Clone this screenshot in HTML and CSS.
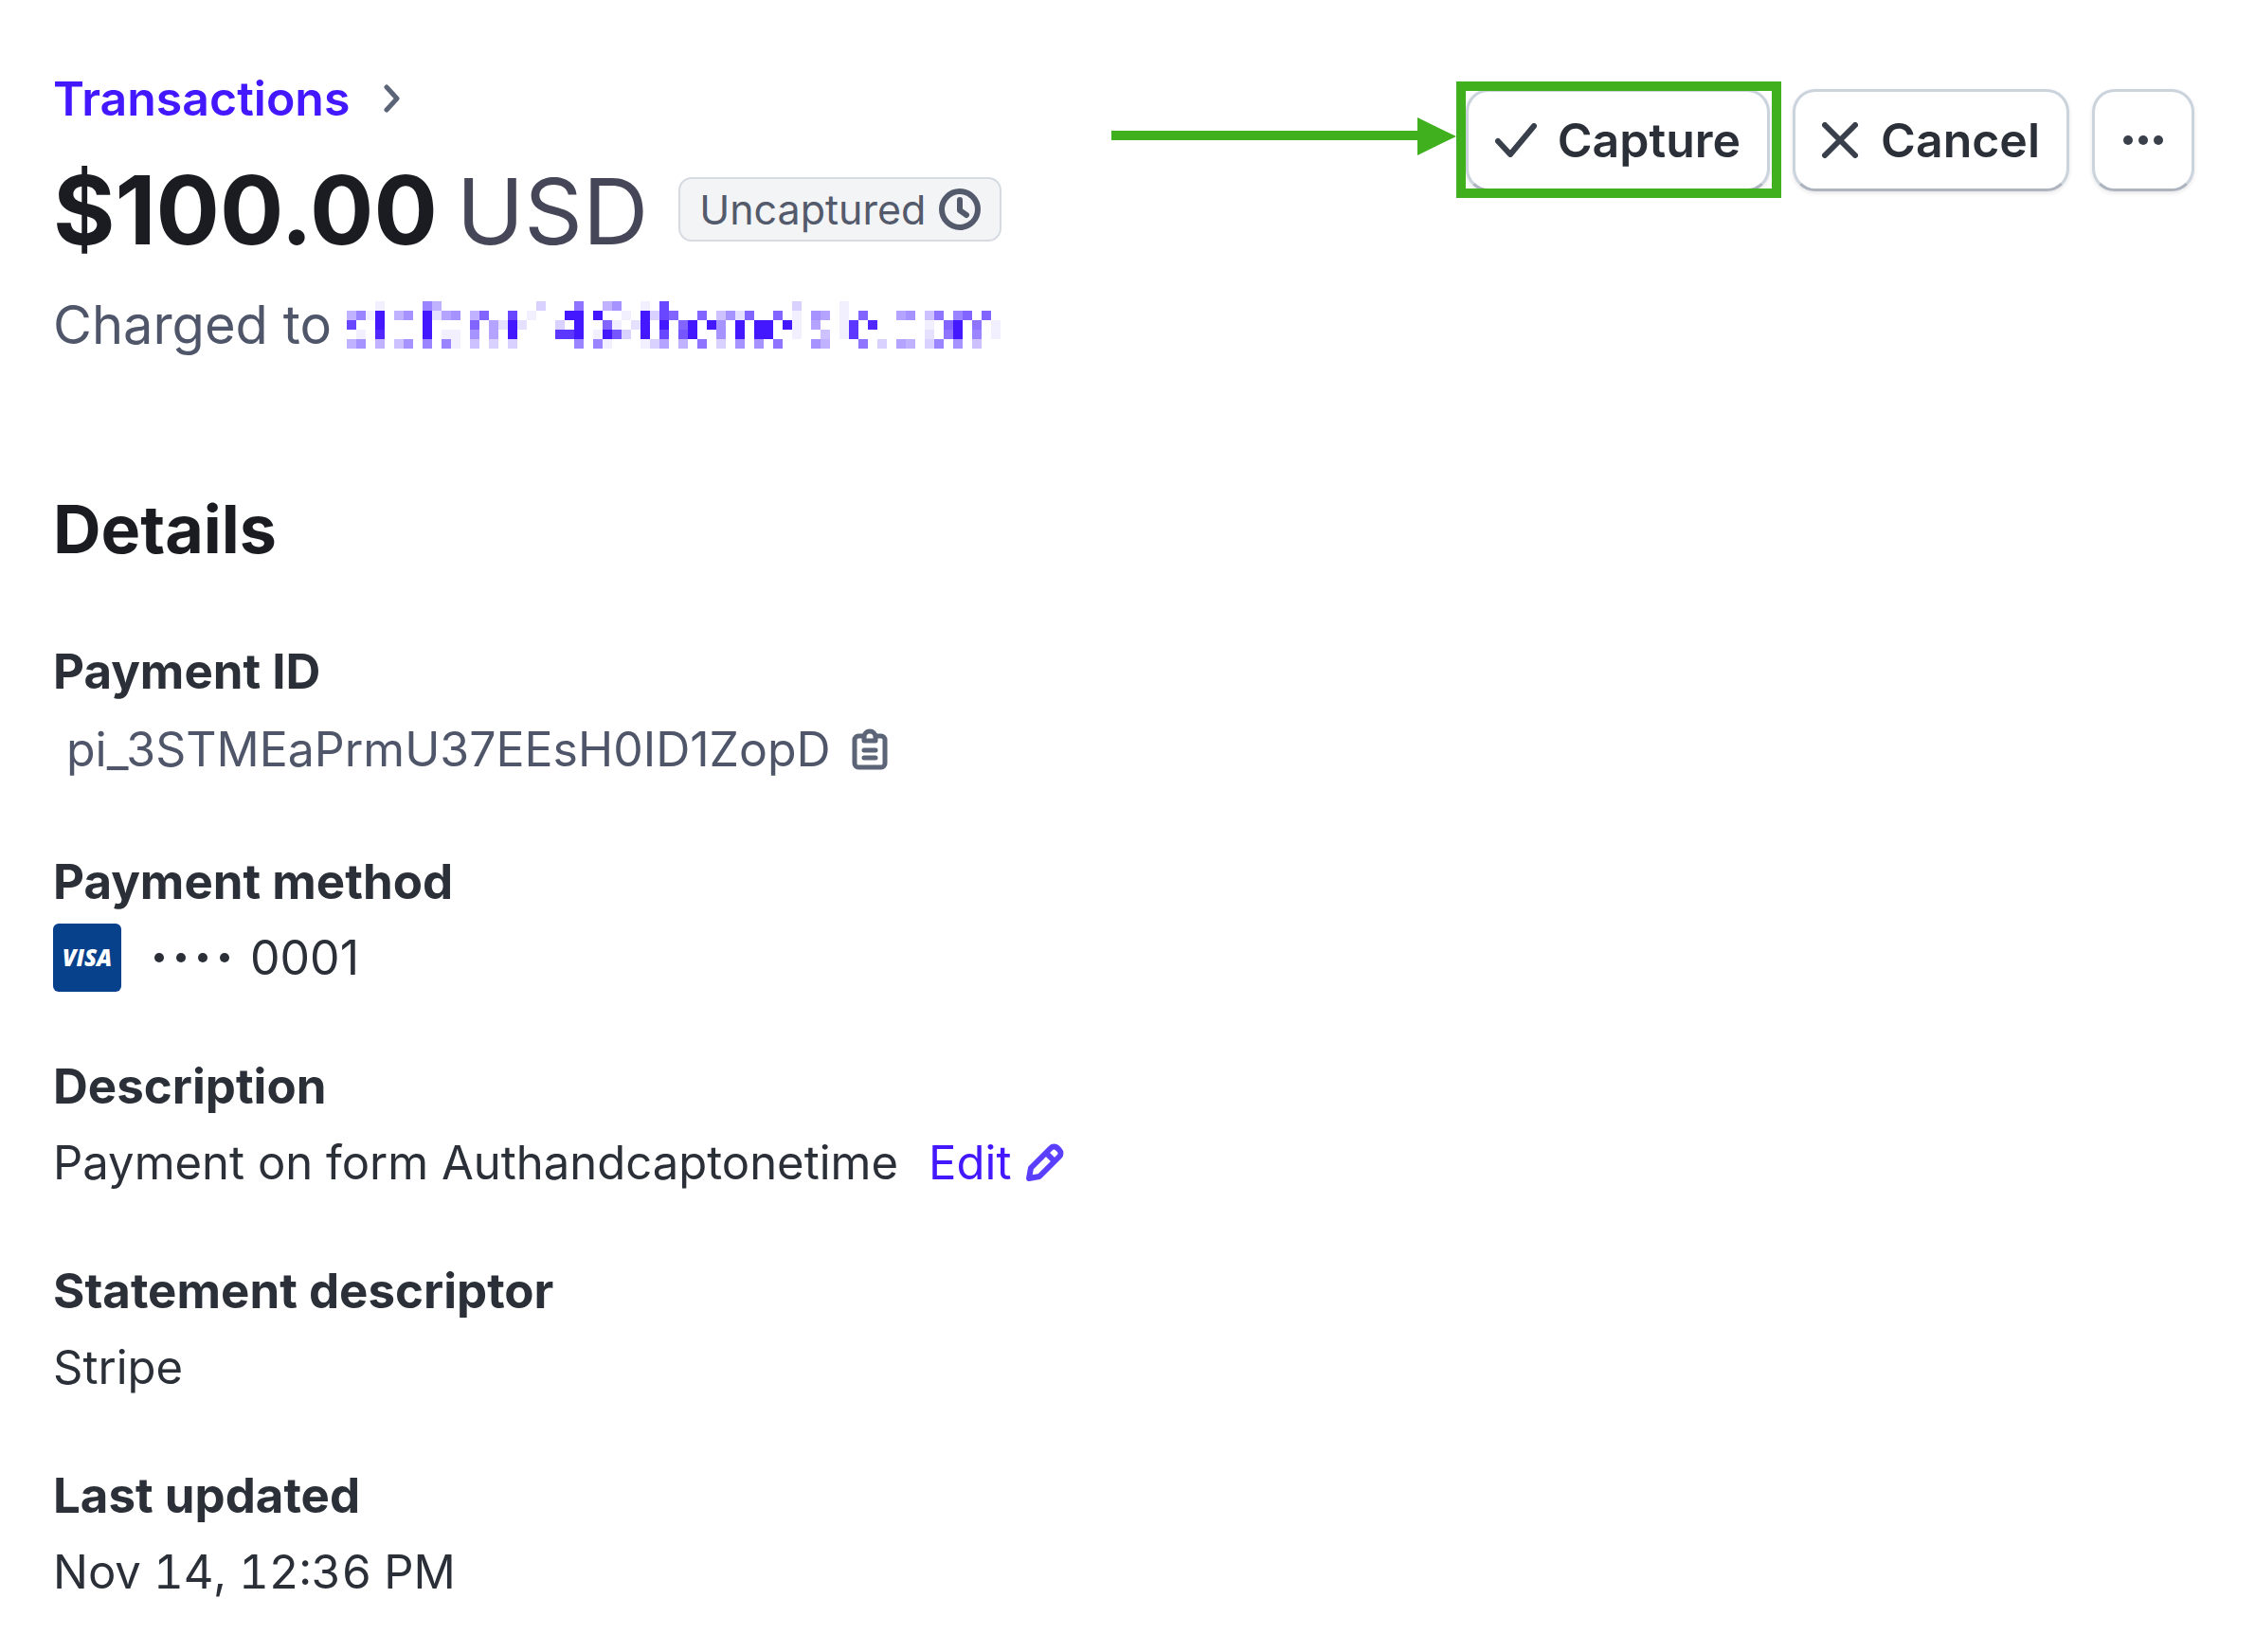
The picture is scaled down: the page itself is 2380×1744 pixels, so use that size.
FILE: index.html
```html
<!DOCTYPE html>
<html lang="en">
<head>
    <meta charset="UTF-8">
    <meta name="viewport" content="width=device-width, initial-scale=1.0">
    <title>Transaction $100.00 USD</title>
    <link rel="stylesheet" href="styles.css">
</head>
<body>

    <header class="page-header">
        <div class="summary">
            <nav class="breadcrumb">
                <a href="#">Transactions</a>
                <svg class="chevron" viewBox="0 0 18 30"><path d="M3 3l11 12L3 27"/></svg>
            </nav>
            <div class="amount-row">
                <h1 class="amount">$100.00 <span class="currency">USD</span></h1>
                <span class="badge">
                    Uncaptured
                    <svg class="clock" viewBox="0 0 44 44"><circle cx="22" cy="22" r="19"/><path d="M22 12v11l7 5"/></svg>
                </span>
            </div>
            <p class="charged">Charged to <a href="#" aria-label="Customer email"><svg class="masked" id="maskedEmail" viewBox="0 0 69 5"></svg></a></p>
        </div>

        <div class="actions">
            <div class="highlight">
                <button type="button" class="btn btn-capture">
                    <svg class="icon-check" viewBox="0 0 44 36"><path d="M3 19l13 14L41 3"/></svg>
                    Capture
                </button>
                <svg class="arrow" viewBox="0 0 364 40"><path d="M0 14h323V0l41 20-41 20V24H0z"/></svg>
            </div>
            <button type="button" class="btn">
                <svg class="icon-close" viewBox="0 0 38 38"><path d="M3 3l32 32M35 3L3 35"/></svg>
                Cancel
            </button>
            <button type="button" class="btn btn-more" aria-label="More">
                <svg class="icon-more" viewBox="0 0 42 10"><circle cx="5" cy="5" r="5"/><circle cx="21" cy="5" r="5"/><circle cx="37" cy="5" r="5"/></svg>
            </button>
        </div>
    </header>

    <main class="details">
        <h2>Details</h2>
        <dl>
            <dt>Payment ID</dt>
            <dd class="payment-id">
                pi_3STMEaPrmU37EEsH0ID1ZopD
                <button type="button" class="copy" aria-label="Copy">
                    <svg class="clipboard" viewBox="0 0 38 44">
                        <path d="M11 8H7a4 4 0 0 0-4 4v25a4 4 0 0 0 4 4h24a4 4 0 0 0 4-4V12a4 4 0 0 0-4-4h-4"/>
                        <path d="M13 13V9a6 6 0 0 1 12 0v4z"/>
                        <path d="M13 23h12M13 31h12"/>
                    </svg>
                </button>
            </dd>

            <dt>Payment method</dt>
            <dd class="payment-method">
                <span class="visa">VISA</span>
                <svg class="dots" viewBox="0 0 82 12"><circle cx="6" cy="6" r="5"/><circle cx="29" cy="6" r="5"/><circle cx="52" cy="6" r="5"/><circle cx="75" cy="6" r="5"/></svg>
                0001
            </dd>

            <dt>Description</dt>
            <dd>
                Payment on form Authandcaptonetime
                <a href="#" class="edit">
                    Edit
                    <svg class="pencil" viewBox="0 0 40 40"><path d="M3 37l2-11L26 5a5 5 0 0 1 7 0l2 2a5 5 0 0 1 0 7L14 35zM21 10l9 9"/></svg>
                </a>
            </dd>

            <dt>Statement descriptor</dt>
            <dd>Stripe</dd>

            <dt>Last updated</dt>
            <dd class="date">Nov 14, 12:36 PM</dd>
        </dl>
    </main>

    <script>
        // Pixelated email, one hex digit of opacity per cell
        const rows = [
            "000100008500000000003000900570010c0000000000000300001000000000000000",
            "581f0570f26705a00c01000ff0f0010f3ca00a0472a00a01076010a0006704908a0a",
            "c00f0000f0000a062f200030f00a102f0f0af0f70f0ff0f106001d0e0000010af0901",
            "010e0000f01107060f0000ddf01fb30f0c0bf0070f0ff00100401d0000000209f0801",
            "57050470808104030300000080810001360509030707090007500090306503807040"
        ];
        const masked = document.querySelector("#maskedEmail");

        rows.forEach((row, y) => {
            [...row].forEach((digit, x) => {
                if (digit === "0") return;
                const cell = document.createElementNS("http://www.w3.org/2000/svg", "rect");
                cell.setAttribute("x", x);
                cell.setAttribute("y", y);
                cell.setAttribute("width", 1);
                cell.setAttribute("height", 1);
                cell.setAttribute("opacity", parseInt(digit, 16) / 15);
                masked.appendChild(cell);
            });
        });
    </script>
</body>
</html>
```
FILE: styles.css
```css
* {
    box-sizing: border-box;
}

body {
    margin: 0;
    padding: 72px 64px 32px 56px;
    background-color: white;
    color: #2a2f38;
    font-family: Inter, "Liberation Sans", sans-serif;
    font-size: 50px;
}

a {
    color: #4318ff;
    text-decoration: none;
}

svg {
    display: block;
    flex: none;
    fill: none;
    stroke: currentColor;
    stroke-linecap: round;
    stroke-linejoin: round;
}

h1,
h2,
p,
dl,
dd {
    margin: 0;
}

/* Header */
.page-header {
    display: flex;
    justify-content: space-between;
    align-items: flex-start;
}

.breadcrumb {
    display: flex;
    align-items: center;
    gap: 36px;
    font-weight: 600;
    line-height: 64px;
}

.chevron {
    width: 18px;
    height: 30px;
    color: #5c6478;
    stroke-width: 5;
}

.amount-row {
    display: flex;
    align-items: center;
    gap: 32px;
    margin-top: 24px;
}

.amount {
    display: flex;
    align-items: baseline;
    gap: 20px;
    color: #1a1c21;
    font-size: 100px;
    font-weight: 700;
    line-height: 124px;
}

.currency {
    color: #454759;
    font-size: 96px;
    font-weight: 400;
}

.badge {
    display: flex;
    align-items: center;
    gap: 14px;
    height: 68px;
    margin-bottom: 4px;
    padding: 0 20px;
    border: 2px solid #d5dbe1;
    border-radius: 14px;
    background-color: #f3f4f6;
    color: #535a6c;
    font-size: 43px;
}

.clock {
    width: 44px;
    height: 44px;
    stroke-width: 6;
}

.charged {
    display: flex;
    align-items: center;
    gap: 16px;
    margin-top: 22px;
    color: #4f566a;
    font-size: 56px;
    line-height: 72px;
}

.masked {
    width: 690px;
    height: 50px;
    fill: currentColor;
    stroke: none;
    shape-rendering: crispEdges;
}

/* Buttons */
.actions {
    display: flex;
    gap: 24px;
    margin-top: 22px;
}

.btn {
    display: flex;
    align-items: center;
    justify-content: center;
    gap: 24px;
    height: 108px;
    padding: 0 28px;
    border: 3px solid #cbd3dc;
    border-bottom-color: #adb4bf;
    border-radius: 24px;
    background-color: white;
    box-shadow: 0 2px 4px rgba(0, 0, 0, 0.1);
    color: #2a2f38;
    font-family: inherit;
    font-size: 50px;
    font-weight: 600;
}

.btn svg {
    color: #3a3f4c;
}

.btn-capture {
    gap: 22px;
}

.btn-more {
    width: 108px;
    padding: 0;
}

.icon-check {
    width: 44px;
    height: 36px;
    stroke-width: 6;
}

.icon-close {
    width: 38px;
    height: 38px;
    stroke-width: 6;
}

.icon-more {
    width: 42px;
    height: 10px;
    fill: currentColor;
    stroke: none;
}

/* Green callout over the capture button */
.highlight {
    position: relative;
}

.highlight::after {
    content: "";
    position: absolute;
    inset: -8px -12px -7px -10px;
    border: 10px solid #41b01f;
}

.arrow {
    position: absolute;
    top: 30px;
    right: calc(100% + 10px);
    width: 364px;
    height: 40px;
    fill: #41b01f;
    stroke: none;
}

/* Details */
.details h2 {
    margin: 132px 0 66px;
    color: #1a1c21;
    font-size: 70px;
    font-weight: 700;
    line-height: 96px;
}

.details dt {
    font-size: 51px;
    font-weight: 700;
    line-height: 72px;
}

.details dd {
    display: flex;
    align-items: center;
    height: 88px;
    margin-bottom: 56px;
    font-size: 49px;
}

.details .payment-id,
.details .payment-method {
    font-size: 50px;
}

.details .payment-id {
    gap: 22px;
    height: 92px;
    margin-bottom: 58px;
    padding-left: 14px;
    color: #4f566a;
}

.details .date {
    font-variant-numeric: tabular-nums;
}

.copy {
    padding: 0;
    border: 0;
    background: none;
    color: #5c6478;
}

.clipboard {
    width: 38px;
    height: 44px;
    stroke-width: 5;
}

.visa {
    width: 72px;
    height: 72px;
    border-radius: 6px;
    background-color: #07408b;
    color: white;
    font-family: "Open Sans", sans-serif;
    font-size: 24px;
    font-style: italic;
    font-weight: 800;
    line-height: 72px;
    text-align: center;
}

.dots {
    width: 82px;
    height: 12px;
    margin: 0 20px 0 34px;
    fill: currentColor;
    stroke: none;
}

.edit {
    display: flex;
    align-items: center;
    gap: 16px;
    margin-left: 32px;
}

.pencil {
    width: 40px;
    height: 40px;
    color: #5a3fff;
    stroke-width: 6;
}
```
